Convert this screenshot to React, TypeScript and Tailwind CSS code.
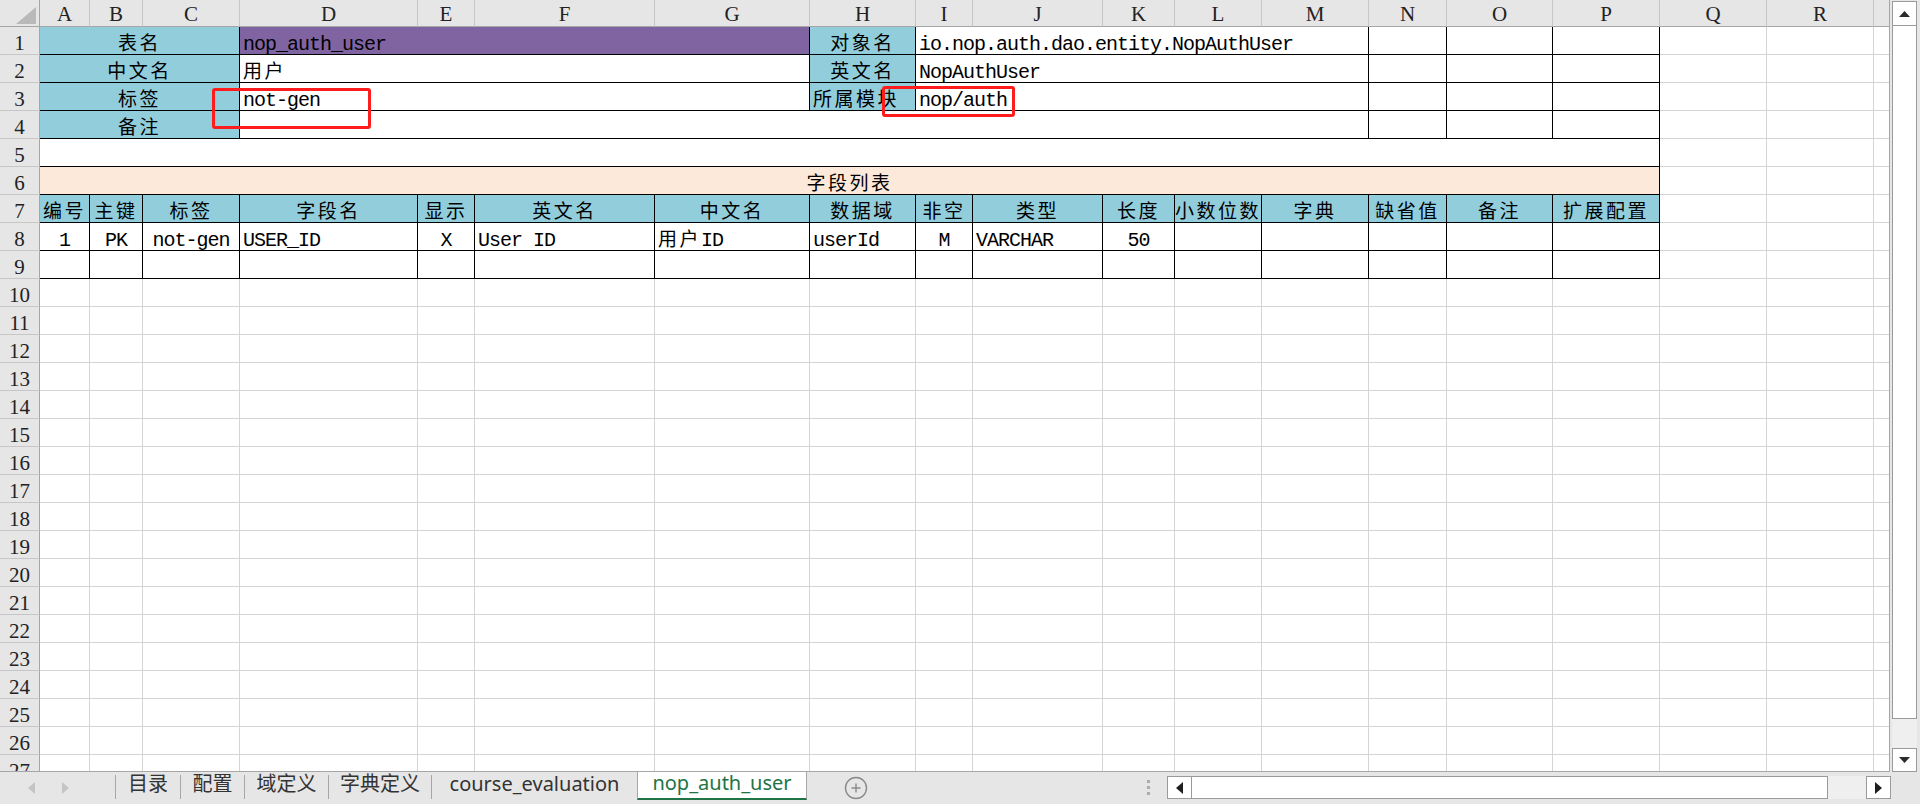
import React from 'react'

type Cell = {
  span?: number
  text?: React.ReactNode
  bg?: string
  center?: boolean
  black?: boolean
}

const COLS =
  'grid grid-cols-[40px_50px_53px_97px_178px_57px_180px_155px_106px_57px_130px_72px_87px_107px_78px_106px_107px_107px_107px_15px]'

const LETTERS = ['A', 'B', 'C', 'D', 'E', 'F', 'G', 'H', 'I', 'J', 'K', 'L', 'M', 'N', 'O', 'P', 'Q', 'R', '']

const SPAN: Record<number, string> = {
  1: '',
  3: 'col-span-3',
  4: 'col-span-4',
  5: 'col-span-5',
  10: 'col-span-10',
  16: 'col-span-16',
}

const BLUE = 'bg-[#92cddc]'
const PURPLE = 'bg-[#8064a2]'
const PEACH = 'bg-[#fde9d9]'

const Zh = ({ children }: { children: React.ReactNode }) => (
  <span className="font-['Noto_Sans_CJK_SC',sans-serif] text-[19px] leading-[12px] tracking-[2.5px]">{children}</span>
)

const blue = (s: string, span = 1): Cell => ({ text: <Zh>{s}</Zh>, bg: BLUE, center: true, black: true, span })
const val = (text?: React.ReactNode, span = 1, extra: Partial<Cell> = {}): Cell => ({ text, span, black: true, ...extra })
const mid = (text: string): Cell => ({ text, black: true, center: true })
const nop = (): Cell[] => [val(), val(), val()]

const TABLE: Cell[][] = [
  [blue('表名', 3), val('nop_auth_user', 4, { bg: PURPLE }), blue('对象名'), val('io.nop.auth.dao.entity.NopAuthUser', 5), ...nop()],
  [blue('中文名', 3), val(<Zh>用户</Zh>, 4), blue('英文名'), val('NopAuthUser', 5), ...nop()],
  [blue('标签', 3), val('not-gen', 4), { ...blue('所属模块'), center: false }, val('nop/auth', 5), ...nop()],
  [blue('备注', 3), val(undefined, 10), ...nop()],
  [val(undefined, 16)],
  [val(<Zh>字段列表</Zh>, 16, { bg: PEACH, center: true })],
  ['编号', '主键', '标签', '字段名', '显示', '英文名', '中文名', '数据域', '非空', '类型', '长度', '小数位数', '字典', '缺省值', '备注', '扩展配置'].map((s) => blue(s)),
  [
    mid('1'),
    mid('PK'),
    mid('not-gen'),
    val('USER_ID'),
    mid('X'),
    val('User ID'),
    val(
      <>
        <Zh>用户</Zh>ID
      </>,
    ),
    val('userId'),
    mid('M'),
    val('VARCHAR'),
    mid('50'),
    val(),
    val(),
    val(),
    val(),
    val(),
  ],
  Array.from({ length: 16 }, () => val()),
]

const RowHead = ({ n }: { n: number }) => (
  <div className="overflow-hidden border-r border-b border-r-[#a6a6a6] border-b-[#c6c6c6] bg-[#e6e6e6] pt-[3px] text-center font-['Liberation_Serif',serif] text-[21px] leading-[26px] text-[#222]">
    {n}
  </div>
)

const DataCell = ({ c }: { c: Cell }) => (
  <div
    className={`overflow-hidden whitespace-nowrap border-r border-b pt-[7px] font-['Liberation_Mono','Noto_Sans_CJK_SC',monospace] text-[20px] leading-[22px] tracking-[-1px] text-black ${
      c.black ? 'border-black' : 'border-[#d4d4d4]'
    } ${c.bg ?? 'bg-white'} ${c.center ? 'text-center' : 'pl-[3px]'} ${SPAN[c.span ?? 1]}`}
  >
    {c.text}
  </div>
)

const Grey = ({ last }: { last?: boolean }) => (
  <div className={last ? 'border-b border-[#d4d4d4]' : 'border-r border-b border-[#d4d4d4]'} />
)

const Sep = () => <div className="mt-[3px] h-[24px] w-px bg-[#a6a6a6]" />

const Tab = ({ w, children }: { w: string; children: React.ReactNode }) => (
  <div className={`${w} h-[28px] text-center leading-[24px]`}>{children}</div>
)

const Btn = ({ children, cls }: { children: React.ReactNode; cls: string }) => (
  <div className={`flex items-center justify-center border border-[#9b9b9b] bg-white ${cls}`}>{children}</div>
)

export default function App() {
  const rows: React.ReactNode[] = []
  for (let r = 1; r <= 27; r++) {
    const cells = TABLE[r - 1]
    rows.push(
      <React.Fragment key={r}>
        <RowHead n={r} />
        {cells ? (
          <>
            {cells.map((c, i) => (
              <DataCell key={i} c={c} />
            ))}
            <Grey />
            <Grey />
            <Grey last />
          </>
        ) : (
          <>
            {Array.from({ length: 18 }, (_, i) => (
              <Grey key={i} />
            ))}
            <Grey last />
          </>
        )}
      </React.Fragment>,
    )
  }

  return (
    <div className="flex h-[804px] w-[1920px] flex-col overflow-hidden bg-[#e6e6e6]">
      <div className="flex h-[772px]">
        {/* sheet */}
        <div className="relative h-[772px] w-[1890px] overflow-hidden border-r border-b border-[#a6a6a6] bg-white">
          <div className={`${COLS} h-[27px] bg-[#e6e6e6] font-['Liberation_Serif',serif] text-[21px] text-[#222]`}>
            <div className="relative border-r border-b border-[#a6a6a6]">
              <svg className="absolute left-0 top-0" width="40" height="27" viewBox="0 0 40 27">
                <polygon points="36,7 36,24 16,24" fill="#b9b9b9" />
              </svg>
            </div>
            {LETTERS.map((l, i) => (
              <div
                key={i}
                className={`border-b border-b-[#a6a6a6] pt-[3px] text-center leading-[23px] ${
                  i < 18 ? 'border-r border-r-[#c6c6c6]' : ''
                }`}
              >
                {l}
              </div>
            ))}
          </div>
          <div className={`${COLS} auto-rows-[28px]`}>{rows}</div>

          <div className="absolute left-[212px] top-[88px] h-[41px] w-[159px] rounded-[3px] border-[3px] border-[#ff1c1c]" />
          <div className="absolute left-[882px] top-[86px] h-[31px] w-[133px] rounded-[3px] border-[3px] border-[#ff1c1c]" />
        </div>

        {/* vertical scrollbar */}
        <div className="ml-[2px] flex w-[25px] flex-col">
          <Btn cls="mt-[1px] h-[25px]">
            <svg width="11" height="6" viewBox="0 0 11 6">
              <path d="M5.5 0 L11 6 L0 6 Z" fill="#2b2b2b" />
            </svg>
          </Btn>
          <div className="h-[693px] border-x border-b border-[#9b9b9b] bg-white" />
          <div className="h-[29px] bg-[#efefef]" />
          <Btn cls="h-[24px]">
            <svg width="11" height="6" viewBox="0 0 11 6">
              <path d="M0 0 L11 0 L5.5 6 Z" fill="#2b2b2b" />
            </svg>
          </Btn>
        </div>
      </div>

      {/* sheet tabs */}
      <div className="flex h-[32px] items-start font-['Noto_Sans','Noto_Sans_CJK_SC',sans-serif] text-[20px] text-[#333]">
        <div className="flex h-[31px] w-[115px] items-center">
          <svg className="ml-[28px]" width="8" height="12" viewBox="0 0 8 12">
            <path d="M7 0 L7 12 L0 6 Z" fill="#c4c4c4" />
          </svg>
          <svg className="ml-[26px]" width="8" height="12" viewBox="0 0 8 12">
            <path d="M0 0 L7 6 L0 12 Z" fill="#c4c4c4" />
          </svg>
        </div>
        <Sep />
        <Tab w="w-[64px]">目录</Tab>
        <Sep />
        <Tab w="w-[63px]">配置</Tab>
        <Sep />
        <Tab w="w-[83px]">域定义</Tab>
        <Sep />
        <Tab w="w-[102px]">字典定义</Tab>
        <Sep />
        <Tab w="w-[205px]">course_evaluation</Tab>
        <div className="-mt-px h-[29px] w-[170px] border-x border-b-2 border-x-[#a6a6a6] border-b-[#217346] bg-white text-center leading-[24px] text-[#217346]">
          nop_auth_user
        </div>
        <div className="flex w-[98px] justify-center pt-[4px]">
          <svg width="24" height="24" viewBox="0 0 24 24" fill="none" stroke="#8a8a8a" strokeWidth="1.4">
            <circle cx="12" cy="12" r="10.5" />
            <path d="M12 7.5 V16.5 M7.5 12 H16.5" />
          </svg>
        </div>
        <div className="w-[242px]" />
        <div className="mt-[8px] flex w-[3px] flex-col gap-[3px]">
          <div className="h-[3px] bg-[#ababab]" />
          <div className="h-[3px] bg-[#ababab]" />
          <div className="h-[3px] bg-[#ababab]" />
        </div>
        <div className="w-[17px]" />
        <div className="mt-[4px] flex h-[23px] w-[724px]">
          <Btn cls="w-[25px] h-full">
            <svg width="7" height="12" viewBox="0 0 7 12">
              <path d="M7 0 L7 12 L0 6 Z" fill="#1f1f1f" />
            </svg>
          </Btn>
          <div className="h-full w-[636px] border-y border-r border-[#9b9b9b] bg-white" />
          <div className="h-full w-[38px] bg-[#efefef]" />
          <Btn cls="w-[25px] h-full">
            <svg width="7" height="12" viewBox="0 0 7 12">
              <path d="M0 0 L7 6 L0 12 Z" fill="#1f1f1f" />
            </svg>
          </Btn>
        </div>
      </div>
    </div>
  )
}
